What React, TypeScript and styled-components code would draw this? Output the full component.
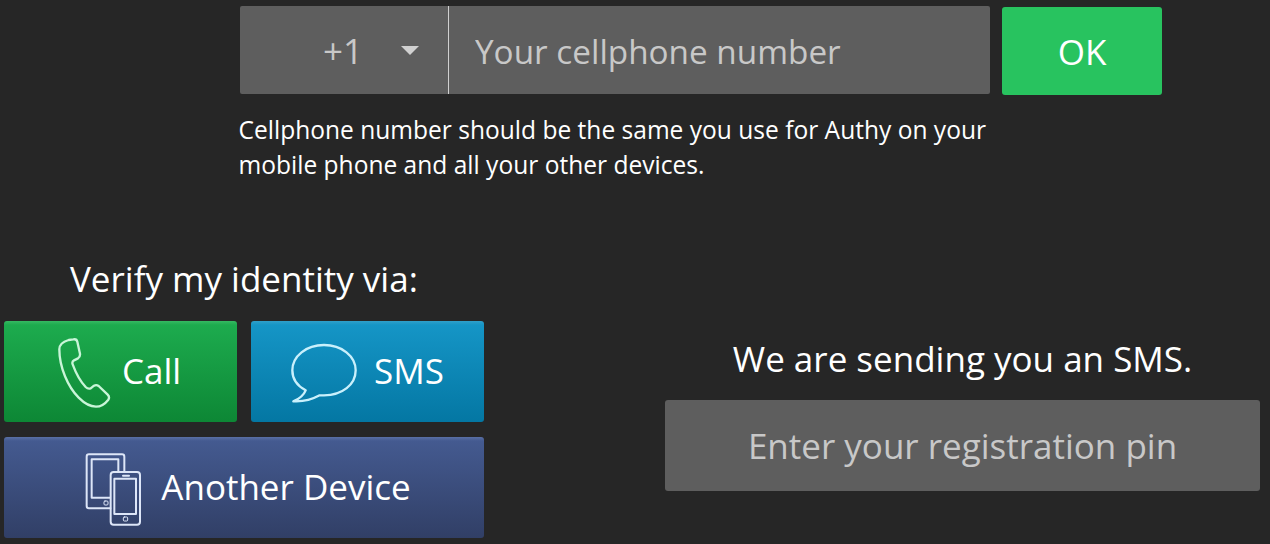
import { FC, useState } from 'react';
import styled, { createGlobalStyle } from 'styled-components';

type Variant = 'call' | 'sms' | 'device';

const GRADIENTS: Record<Variant, string> = {
  call: '#36b962 0, #1dab4e 4px, #0d8735 100%',
  sms: '#309fca 0, #1595c6 4px, #0477a3 100%',
  device: '#5a70a6 0, #445a90 4px, #313f66 100%',
};

const PADDINGS: Record<Variant, string> = {
  call: '0 3px 0 0',
  sms: '0 1px 0 0',
  device: '0 0 0 8px',
};

const PhoneIcon: FC = () => (
  <Icon width="54" height="72" viewBox="170 79 162 216" stroke="#c9f5d8">
    <path
      strokeWidth="7"
      d="M177 116C177 100 191 92 205 88L219 86Q229 84 231 93L239 129Q240 139 233 143L221 149Q214 153 217 161C228 191 240 212 256 229Q263 236 271 233L281 225Q288 221 295 226L322 252Q329 259 324 267C313 281 301 288 287 288C270 288 252 278 235 261C203 229 177 170 177 116Z"
    />
  </Icon>
);

const BubbleIcon: FC = () => (
  <Icon width="68" height="60" viewBox="149 96 204 180" stroke="#c9f0fc">
    <path
      strokeWidth="7"
      d="M196 238C169 224 156 203 156 178C156 135 198 102 251 102C304 102 346 135 346 178C346 221 306 253 251 253L238 253C216 265 190 273 159 271C178 263 190 253 196 238Z"
    />
  </Icon>
);

const DevicesIcon: FC = () => (
  <Icon width="56" height="73" viewBox="256 86 168 219" stroke="#dde6f8">
    <path strokeWidth="6" d="M332 252H268Q261 252 261 245V97Q261 90 268 90H367Q374 90 374 97V141" />
    <path strokeWidth="6" d="M331 220H276V105H356V141" />
    <rect strokeWidth="6" x="333" y="143" width="88" height="158" rx="9" />
    <rect strokeWidth="6" x="344" y="163" width="65" height="106" />
    <path strokeWidth="6" d="M370 154H388" />
    <rect strokeWidth="3" x="313" y="230" width="12" height="12" rx="3" />
    <rect strokeWidth="3" x="371" y="278" width="13" height="12" rx="3" />
  </Icon>
);

const App: FC = () => {
  const [phone, setPhone] = useState('');
  const [pin, setPin] = useState('');

  return (
    <Page>
      <GlobalStyle />
      <PhoneSection>
        <PhoneRow>
          <PhoneGroup>
            <CountryCode type="button">
              +1
              <Caret />
            </CountryCode>
            <PhoneInput
              value={phone}
              onChange={(e) => setPhone(e.target.value)}
              placeholder="Your cellphone number"
            />
          </PhoneGroup>
          <OkButton type="button">OK</OkButton>
        </PhoneRow>
        <Hint>
          Cellphone number should be the same you use for Authy on your
          <br />
          mobile phone and all your other devices.
        </Hint>
      </PhoneSection>
      <Columns>
        <VerifySection>
          <VerifyTitle>Verify my identity via:</VerifyTitle>
          <VerifyGrid>
            <VerifyButton type="button" $variant="call">
              <PhoneIcon />
              <Label $gap={11}>Call</Label>
            </VerifyButton>
            <VerifyButton type="button" $variant="sms">
              <BubbleIcon />
              <Label $gap={16}>SMS</Label>
            </VerifyButton>
            <VerifyButton type="button" $variant="device">
              <DevicesIcon />
              <Label $gap={20}>Another Device</Label>
            </VerifyButton>
          </VerifyGrid>
        </VerifySection>
        <PinSection>
          <PinTitle>We are sending you an SMS.</PinTitle>
          <PinInput
            value={pin}
            onChange={(e) => setPin(e.target.value)}
            placeholder="Enter your registration pin"
          />
        </PinSection>
      </Columns>
    </Page>
  );
};

export default App;

const GlobalStyle = createGlobalStyle`
  * {
    box-sizing: border-box;
  }

  body {
    margin: 0;

    background: #262626;
  }

  button,
  input {
    margin: 0;
    padding: 0;

    font: inherit;
    border: 0;
    outline: 0;
  }
`;

const Page = styled.main`
  display: flex;
  flex-direction: column;

  width: 1270px;
  height: 544px;
  overflow: hidden;

  font-family: 'Open Sans', 'Noto Sans', sans-serif;
  font-size: 35px;
  color: #fff;
  background: #262626;
`;

const PhoneSection = styled.section`
  height: 256px;
  padding: 6px 0 0 240px;
`;

const PhoneRow = styled.div`
  display: flex;
  gap: 12px;
`;

const PhoneGroup = styled.div`
  display: flex;

  width: 750px;
  height: 88px;
  overflow: hidden;

  background: #5e5e5e;
  border-radius: 2px;
`;

const CountryCode = styled.button`
  display: flex;
  align-items: center;
  justify-content: flex-end;
  gap: 38px;

  width: 209px;
  padding: 1px 29px 0 0;

  color: #c8c8c8;
  background: transparent;
  border-right: 1px solid #d0d0d0;
`;

const Caret = styled.span`
  margin-top: -1px;

  border-top: 9px solid #d0d0d0;
  border-right: 9px solid transparent;
  border-left: 9px solid transparent;
`;

const PhoneInput = styled.input`
  flex: 1;

  min-width: 0;
  padding: 1px 0 0 26px;

  font-size: 33.3px;
  color: #fff;
  background: transparent;

  &::placeholder {
    color: #c8c8c8;
    opacity: 1;
  }
`;

const OkButton = styled.button`
  width: 160px;
  height: 88px;
  margin-top: 1px;
  padding-top: 1px;

  color: #fff;
  background: #28c35f;
  border-radius: 3px;
`;

const Hint = styled.p`
  margin: 17px 0 0 -1.5px;

  font-size: 24.55px;
  line-height: 35px;
`;

const Columns = styled.div`
  display: flex;
  justify-content: space-between;

  padding: 0 10px 0 4px;
`;

const VerifySection = styled.section`
  width: 480px;
`;

const VerifyTitle = styled.h2`
  margin: -1px 0 18px 66px;

  font-size: 35px;
  font-weight: 400;
  line-height: 48px;
`;

const VerifyGrid = styled.div`
  display: grid;
  grid-template-columns: 1fr 1fr;
  gap: 15px 14px;
`;

const VerifyButton = styled.button<{ $variant: Variant }>`
  display: flex;
  align-items: center;
  justify-content: center;
  grid-column: ${({ $variant }) => ($variant === 'device' ? 'span 2' : 'auto')};

  height: 101px;
  padding: ${({ $variant }) => PADDINGS[$variant]};

  color: #fff;
  background: linear-gradient(${({ $variant }) => GRADIENTS[$variant]});
  border-radius: 3px;
`;

const Label = styled.span<{ $gap: number }>`
  margin: -2px 0 0 ${({ $gap }) => $gap}px;
`;

const Icon = styled.svg`
  flex: none;

  margin-top: 3px;

  fill: none;
  stroke-linecap: round;
  stroke-linejoin: round;
`;

const PinSection = styled.section`
  width: 595px;
  padding-top: 79px;
`;

const PinTitle = styled.h2`
  margin: 0 0 17px;

  font-size: 35px;
  font-weight: 400;
  line-height: 48px;
  text-align: center;
`;

const PinInput = styled.input`
  width: 100%;
  height: 91px;

  color: #fff;
  text-align: center;
  background: #5e5e5e;
  border-radius: 3px;

  &::placeholder {
    color: #c8c8c8;
    opacity: 1;
  }
`;
